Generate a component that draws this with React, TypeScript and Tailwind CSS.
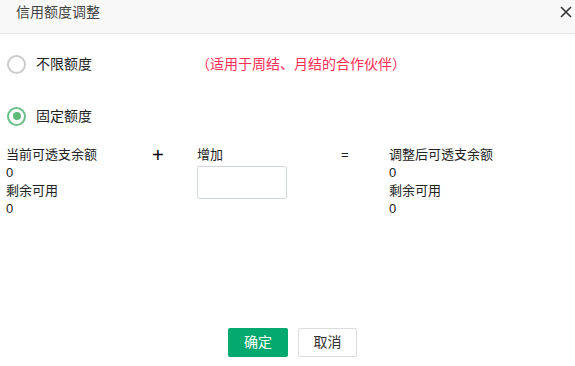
import { useState } from "react";

export default function App() {
  const [mode, setMode] = useState<"unlimited" | "fixed">("fixed");
  const [amount, setAmount] = useState("");

  const font = { fontFamily: '"Liberation Sans", "Noto Sans CJK SC", sans-serif' };

  const Radio = ({ checked }: { checked: boolean }) => (
    <span
      className={`flex h-[19px] w-[19px] items-center justify-center rounded-full border-2 ${
        checked ? "border-[#6cc08a]" : "border-[#cccccc]"
      }`}
    >
      {checked && <span className="h-[8px] w-[8px] rounded-full bg-[#5dba78]" />}
    </span>
  );

  return (
    <div className="h-[366px] w-[575px] overflow-hidden bg-white text-[#333]" style={font}>
      {/* header */}
      <div className="flex h-[34px] items-start justify-between border-b border-[#e8e8e8] bg-[#f8f8f8] pl-4 pr-[2px] pt-[2px]">
        <span className="text-[14px] leading-[20px] text-[#444]">信用额度调整</span>
        <button className="mt-[3px] flex h-[14px] w-[14px] items-center justify-center">
          <svg width="12" height="12" viewBox="0 0 12 12" fill="none" stroke="#333" strokeWidth="1.6">
            <path d="M1 1 L11 11 M11 1 L1 11" />
          </svg>
        </button>
      </div>

      {/* radio options */}
      <div className="pl-[7px]">
        <div className="mt-[20px] flex h-[20px] items-center">
          <label className="flex cursor-pointer items-center gap-[10px]" onClick={() => setMode("unlimited")}>
            <Radio checked={mode === "unlimited"} />
            <span className="text-[14px] leading-[20px] text-[#222]">不限额度</span>
          </label>
          <span className="ml-[104px] text-[14px] leading-[20px] text-[#ff2d55]">（适用于周结、月结的合作伙伴）</span>
        </div>

        <div className="mt-[32px] flex h-[20px] items-center">
          <label className="flex cursor-pointer items-center gap-[10px]" onClick={() => setMode("fixed")}>
            <Radio checked={mode === "fixed"} />
            <span className="text-[14px] leading-[20px] text-[#222]">固定额度</span>
          </label>
        </div>
      </div>

      {/* calculation */}
      <div className="mt-[20px] flex pl-[6px] text-[13px] leading-[18px] text-[#222]">
        <div className="w-[146px]">
          <div>当前可透支余额</div>
          <div>0</div>
          <div>剩余可用</div>
          <div>0</div>
        </div>
        <div className="w-[45px] text-[20px] leading-[18px] font-medium text-black">+</div>
        <div className="w-[144px]">
          <div>增加</div>
          <input
            value={amount}
            onChange={(e) => setAmount(e.target.value)}
            className="mt-[2px] h-[33px] w-[90px] rounded-[2px] border border-[#d3d8e0] px-2 outline-none"
          />
        </div>
        <div className="w-[48px]">=</div>
        <div>
          <div>调整后可透支余额</div>
          <div>0</div>
          <div>剩余可用</div>
          <div>0</div>
        </div>
      </div>

      {/* footer */}
      <div className="mt-[110px] flex justify-center gap-[10px] pl-[10px]">
        <button className="h-[29px] w-[60px] rounded-[2px] bg-[#03a96e] text-[14px] text-white">确定</button>
        <button className="h-[29px] w-[59px] rounded-[2px] border border-[#dcdcdc] bg-white text-[14px] text-[#333]">
          取消
        </button>
      </div>
    </div>
  );
}
